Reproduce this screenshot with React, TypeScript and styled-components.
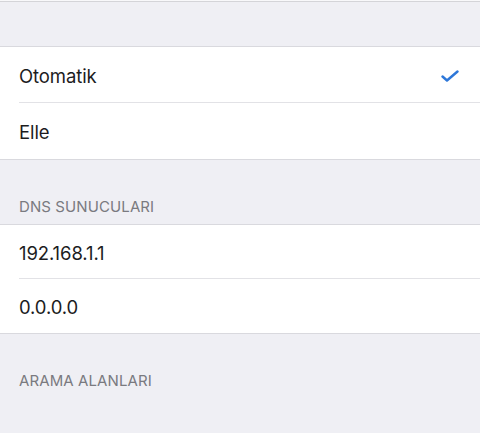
import React from "react";
import styled, { createGlobalStyle } from "styled-components";

const GlobalStyle = createGlobalStyle`
  html, body {
    margin: 0;
    padding: 0;
    background: #efeff4;
  }
  body {
    font-family: Inter, "Noto Sans", "Liberation Sans", sans-serif;
    -webkit-font-smoothing: antialiased;
  }
`;

const Page = styled.div`
  width: 480px;
  height: 433px;
  overflow: hidden;
  background: #efeff4;
  border-top: 1px solid #f8f8fa;
`;

const TopGap = styled.div`
  height: 44px;
  border-top: 1px solid #d4d4d8;
`;

const Group = styled.div`
  background: #fff;
  border-top: 1px solid #d9d9de;
  border-bottom: 1px solid #d9d9de;
`;

const Row = styled.div<{ $height: number; $last?: boolean }>`
  height: ${(p) => p.$height}px;
  display: flex;
  align-items: center;
  justify-content: space-between;
  margin-left: 19px;
  padding: 2px 21px 0 0;
  box-sizing: border-box;
  border-bottom: ${(p) => (p.$last ? "none" : "1px solid #e2e2e6")};
`;

const Label = styled.span`
  font-size: 18.5px;
  color: #1c1c1e;
  letter-spacing: -0.1px;
`;

const SectionHeader = styled.div`
  height: 64px;
  display: flex;
  align-items: flex-end;
  padding: 0 19px 8px;
  box-sizing: border-box;
  font-size: 15px;
  color: #7a7a80;
  letter-spacing: 0.1px;
`;

const Check = () => (
  <svg width="18" height="12" viewBox="0 0 18 12" fill="none">
    <path
      d="M1.5 6.5 L6 10.5 L16.5 1.5"
      stroke="#2d77d9"
      strokeWidth="2.4"
      strokeLinecap="round"
      strokeLinejoin="round"
    />
  </svg>
);

export default function App() {
  return (
    <>
      <GlobalStyle />
      <Page>
        <TopGap />
        <Group>
          <Row $height={56}>
            <Label>Otomatik</Label>
            <Check />
          </Row>
          <Row $height={56} $last>
            <Label>Elle</Label>
          </Row>
        </Group>
        <SectionHeader>DNS SUNUCULARI</SectionHeader>
        <Group>
          <Row $height={54}>
            <Label>192.168.1.1</Label>
          </Row>
          <Row $height={54} $last>
            <Label>0.0.0.0</Label>
          </Row>
        </Group>
        <SectionHeader>ARAMA ALANLARI</SectionHeader>
      </Page>
    </>
  );
}
